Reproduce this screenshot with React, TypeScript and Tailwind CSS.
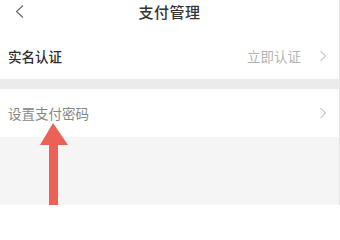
const font = { fontFamily: '"Noto Sans CJK SC", "Noto Sans", sans-serif' };

function Chevron({ className }: { className?: string }) {
  return (
    <svg viewBox="0 0 8 12" className={className} fill="none">
      <path d="M1.5 1 L6.5 6 L1.5 11" stroke="currentColor" strokeWidth="1" />
    </svg>
  );
}

export default function App() {
  return (
    <div className="relative w-[340px] h-[205px] flex flex-col bg-[#f5f5f5] border-r border-[#e4e4e4] overflow-hidden" style={font}>
      {/* header */}
      <div className="relative h-[22px] bg-white flex items-center">
        <svg viewBox="0 0 9 13" className="absolute left-[15px] top-[5px] w-[9px] h-[13px] text-[#666]" fill="none">
          <path d="M8 0.5 L1.5 6.5 L8 12.5" stroke="currentColor" strokeWidth="1.1" />
        </svg>
        <div className="w-full text-center text-[15px] leading-none font-medium text-[#333] tracking-[0.5px] pt-[1px]">支付管理</div>
      </div>

      {/* 实名认证 */}
      <div className="h-[57px] bg-white flex items-center pt-[11px] pl-[8px] pr-[12px]">
        <span className="text-[13.5px] font-medium text-[#2e2e2e]">实名认证</span>
        <span className="ml-auto text-[13.5px] text-[#b3b3b3]">立即认证</span>
        <Chevron className="ml-[18px] w-[8px] h-[12px] text-[#aaa]" />
      </div>

      <div className="h-[10px] bg-[#ebebeb]" />

      {/* 设置支付密码 */}
      <div className="h-[48px] bg-white flex items-center pl-[8px] pr-[12px]">
        <span className="text-[13.5px] text-[#888]">设置支付密码</span>
        <Chevron className="ml-auto w-[8px] h-[12px] text-[#aaa]" />
      </div>

      <div className="flex-1 bg-[#f5f5f5]" />

      {/* red arrow annotation */}
      <svg className="absolute left-0 top-0 w-[340px] h-[205px] pointer-events-none" viewBox="0 0 340 205">
        <polygon points="53,123 68,145 40,145" fill="#ec6157" />
        <rect x="49" y="143" width="9" height="62" fill="#ec6157" />
      </svg>
    </div>
  );
}
